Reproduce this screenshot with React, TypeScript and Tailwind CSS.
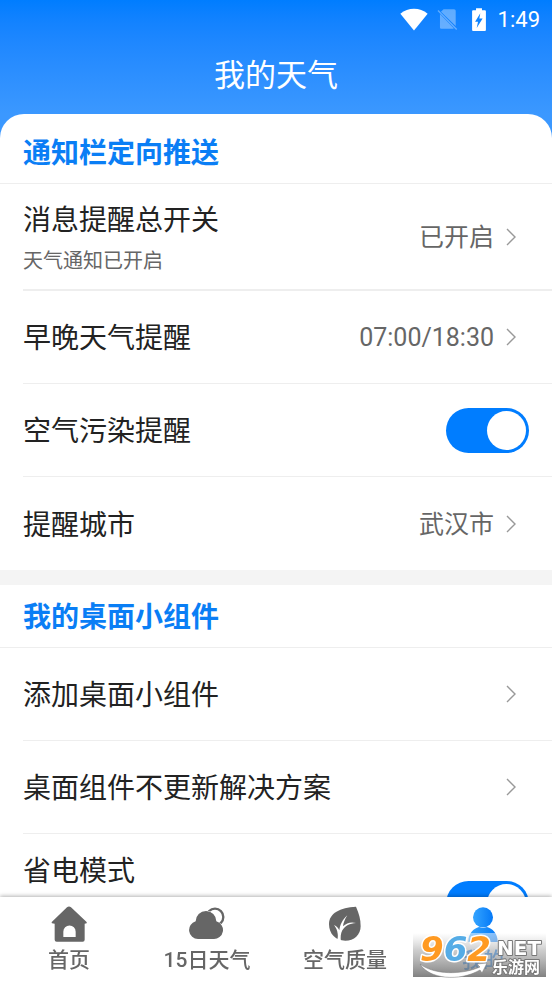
import { useState } from "react";
import type { ReactNode } from "react";

function WifiIcon() {
  return (
    <svg viewBox="0 0 84 68" className="w-7 h-[23px]" fill="#fff" aria-hidden="true">
      <path d="M42 67 1 17C13 7 27 2 42 2s29 5 41 15Z" />
    </svg>
  );
}

function NoSimIcon() {
  return (
    <svg viewBox="0 0 64 66" className="w-[21px] h-[22px]" aria-hidden="true">
      <path d="M12 11 20 3h32q5 0 5 5v46ZM9 18l42 43q-2 2-4 2H13q-4 0-4-4Z" fill="#fff" opacity=".35" />
      <path d="m3 7 57 58" stroke="#fff" strokeWidth="4" opacity=".35" />
    </svg>
  );
}

function BatteryIcon() {
  return (
    <svg viewBox="0 0 42 70" className="w-[14px] h-[23px]" aria-hidden="true">
      <path d="M12 1h18v6h9q3 0 3 3v57q0 3-3 3H3q-3 0-3-3V10q0-3 3-3h9Z" fill="#fff" />
      <path d="M25 16 9 42h9l-4 19 18-29h-10Z" fill="#0d83ff" />
    </svg>
  );
}

function Chevron() {
  return (
    <svg viewBox="0 0 12 18" className="w-3 h-[18px] mr-3 shrink-0" fill="none" aria-hidden="true">
      <path d="m2 1 8 8-8 8" stroke="#999" strokeWidth="1.4" />
    </svg>
  );
}

function HomeIcon() {
  return (
    <svg viewBox="0 0 108 108" className="size-9" fill="#666" aria-hidden="true">
      <path
        fillRule="evenodd"
        d="M48 4q6-5 12 0l46 43q2 2 1 5l-6 1v48q0 6-6 6H17q-6 0-6-6V53l-8-1q-2-3 0-5ZM37 93h37V77a18 18 0 0 0-37 0Z"
      />
    </svg>
  );
}

function CloudIcon() {
  return (
    <svg viewBox="0 0 108 108" className="size-9" aria-hidden="true">
      <circle cx="78" cy="33" r="25" fill="none" stroke="#666" strokeWidth="7" />
      <path
        d="M27 99a27 27 0 0 1-7-53 31 31 0 0 1 62 0 27 27 0 0 1-9 53Z"
        fill="#666"
        stroke="#fff"
        strokeWidth="3"
        paintOrder="stroke"
      />
    </svg>
  );
}

function LeafIcon() {
  return (
    <svg viewBox="0 0 108 108" className="size-9" aria-hidden="true">
      <path d="M87 2c9 20 14 39 14 58 0 27-20 44-46 44C26 104 6 84 6 54 6 21 39 5 87 2Z" fill="#666" />
      <path
        d="M29 108c4-13 4-18 3-25-1-10-5-18-11-26 8 4 13 9 16 16 2-16 9-32 24-45-8 13-12 23-13 33 11-10 23-14 39-10-19 1-32 8-41 22-5 10-6 21-4 35Z"
        fill="#fff"
      />
    </svg>
  );
}

function PersonIcon() {
  return (
    <svg viewBox="0 0 108 108" className="size-9" aria-hidden="true">
      <defs>
        <linearGradient id="person" x1="0" y1="0" x2="1" y2="0">
          <stop offset="0" stopColor="#35a5ff" />
          <stop offset="1" stopColor="#0579f7" />
        </linearGradient>
      </defs>
      <circle cx="54" cy="34" r="30" fill="url(#person)" />
      <path d="M10 108c0-27 16-40 32-45q12 5 24 0c16 5 32 18 32 45Z" fill="url(#person)" />
    </svg>
  );
}

function SiteBadge() {
  return (
    <svg
      viewBox="0 0 133 44"
      className="absolute right-[6px] bottom-[6px] w-[133px] h-11 overflow-visible pointer-events-none"
    >
      <defs>
        <linearGradient id="shade" x1="0" y1="0" x2="0" y2="1">
          <stop offset="0" stopColor="#fff" stopOpacity=".5" />
          <stop offset=".4" stopColor="#b0b0b0" stopOpacity=".65" />
          <stop offset="1" stopColor="#707070" stopOpacity=".88" />
        </linearGradient>
      </defs>
      <rect width="133" height="44" fill="url(#shade)" />
      <path
        d="M7 31c14 11 42 11 60 3l-3-3 10-1-5 10-2-3C46 49 16 46 7 31Z"
        fill="#fff"
        stroke="#777"
        strokeWidth=".5"
      />
      <text
        x="7"
        y="28"
        fontSize="34"
        fontFamily="DejaVu Sans"
        fontStyle="italic"
        fontWeight="700"
        stroke="#fff"
        strokeWidth="3"
        strokeLinejoin="round"
        paintOrder="stroke"
      >
        <tspan fill="#ff9a22">9</tspan>
        <tspan fill="#55ace6">6</tspan>
        <tspan fill="#ff9a22">2</tspan>
      </text>
      <g fill="#fff" stroke="#777" strokeWidth="2" strokeLinejoin="round" paintOrder="stroke" fontWeight="700">
        <text x="84" y="22" fontSize="20" fontFamily="DejaVu Sans">
          NET
        </text>
        <text x="79" y="40" fontSize="16" fontFamily="Noto Sans CJK SC">
          乐游网
        </text>
      </g>
    </svg>
  );
}

const rowClass =
  "flex w-full items-center justify-between pr-[23px] text-left text-[28px] leading-10 text-[#222]";

interface LinkRowProps {
  title: string;
  note?: string;
  value?: string;
  last?: boolean;
}

function LinkRow({ title, note, value, last }: LinkRowProps) {
  const size = note ? "h-[107px] border-b-2" : last ? "h-[93px]" : "h-[93px] border-b";

  return (
    <li className="pl-[23px]">
      <button type="button" className={`${rowClass} ${size} border-[#eeeeee]`}>
        <span className={note ? "pt-2" : "pt-1"}>
          <span className="block">{title}</span>
          {note && <span className="block text-xl leading-10 text-[#666]">{note}</span>}
        </span>
        <span className="flex items-center gap-[11px] text-[25px] text-[#666]">
          {value && <span className="pt-0.5">{value}</span>}
          <Chevron />
        </span>
      </button>
    </li>
  );
}

interface SwitchRowProps {
  title: string;
  tall?: boolean;
}

function SwitchRow({ title, tall }: SwitchRowProps) {
  const [on, setOn] = useState(true);

  return (
    <li className="pl-[23px]">
      <label className={`${rowClass} ${tall ? "h-[139px]" : "h-[93px]"} border-b border-[#eeeeee]`}>
        <span className={tall ? "self-start pt-[18px]" : "pt-1"}>{title}</span>
        <input
          type="checkbox"
          role="switch"
          checked={on}
          onChange={(e) => setOn(e.target.checked)}
          className="flex h-[45px] w-[83px] shrink-0 appearance-none items-center rounded-full bg-gray-300 px-[3px] before:size-[39px] before:rounded-full before:bg-white checked:justify-end checked:bg-[#007dff]"
        />
      </label>
    </li>
  );
}

function Section({ title, children }: { title: string; children: ReactNode }) {
  return (
    <section>
      <h2 className="flex h-[63px] items-center border-b border-[#eeeeee] px-[23px] pt-1 text-[28px] font-bold text-[#0a7ef5]">
        {title}
      </h2>
      <ul>{children}</ul>
    </section>
  );
}

const tabs = [
  { label: "首页", icon: <HomeIcon /> },
  { label: "15日天气", icon: <CloudIcon /> },
  { label: "空气质量", icon: <LeafIcon /> },
  { label: "我的", icon: <PersonIcon />, active: true },
];

export default function App() {
  return (
    <div className="flex h-screen flex-col bg-[#3b98ff] font-[Roboto,'Noto_Sans_CJK_SC',sans-serif]">
      <header className="shrink-0 bg-linear-to-b from-[#007dff] to-[#3b98ff] text-white">
        <div className="flex h-[38px] items-center justify-end pr-3 text-[22px]">
          <WifiIcon />
          <span className="ml-[9px]">
            <NoSimIcon />
          </span>
          <span className="mr-3 ml-[14px]">
            <BatteryIcon />
          </span>
          <span>1:49</span>
        </div>
        <h1 className="h-[76px] text-center text-[31px] leading-[76px] font-normal">我的天气</h1>
      </header>

      <main className="min-h-0 flex-1 overflow-y-auto rounded-t-[24px] bg-white pt-[7px] [scrollbar-width:none]">
        <Section title="通知栏定向推送">
          <LinkRow title="消息提醒总开关" note="天气通知已开启" value="已开启" />
          <LinkRow title="早晚天气提醒" value="07:00/18:30" />
          <SwitchRow title="空气污染提醒" />
          <LinkRow title="提醒城市" value="武汉市" last />
        </Section>
        <div className="h-[15px] bg-[#f4f4f4]" />
        <Section title="我的桌面小组件">
          <LinkRow title="添加桌面小组件" />
          <LinkRow title="桌面组件不更新解决方案" />
          <SwitchRow title="省电模式" tall />
        </Section>
      </main>

      <nav className="relative grid h-[86px] shrink-0 grid-cols-4 bg-white shadow-[0_-1px_4px_rgba(0,0,0,0.3)]">
        {tabs.map((tab) => (
          <a
            key={tab.label}
            href="#"
            className={`flex flex-col items-center pt-[9px] text-[21px] leading-9 font-medium ${
              tab.active ? "text-[#0a7ef5]" : "text-[#666]"
            }`}
          >
            {tab.icon}
            {tab.label}
          </a>
        ))}
        <SiteBadge />
      </nav>
    </div>
  );
}
